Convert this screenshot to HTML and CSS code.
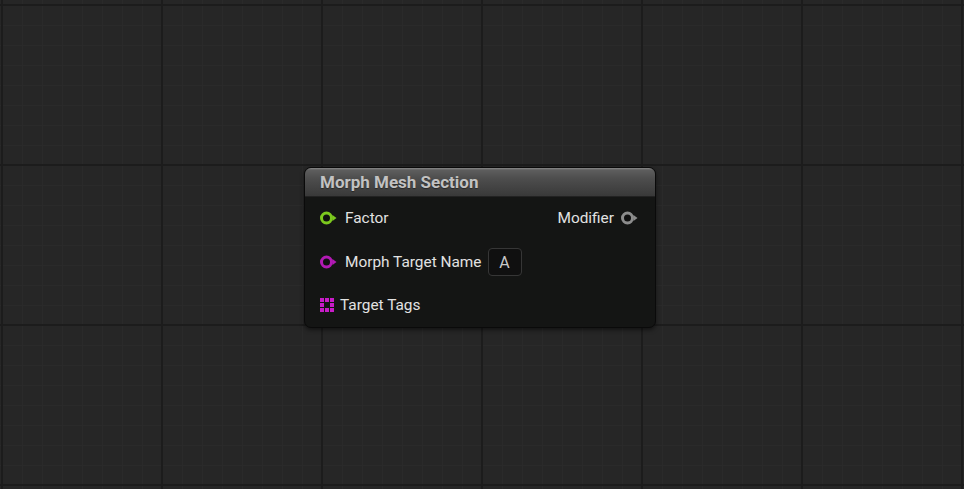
FILE: index.html
```html
<!DOCTYPE html>
<html lang="en">
<head>
  <meta charset="UTF-8" />
  <title>Morph Mesh Section</title>
  <link rel="stylesheet" href="styles.css">
</head>
<body>

<div class="graph">
  <div class="node">
    <div class="node-title">Morph Mesh Section</div>
    <div class="node-body">
      <div class="pin-row">
        <div class="pin">
          <svg class="pin-icon" width="18" height="16" viewBox="0 0 18 16">
            <circle cx="6.5" cy="8" r="5" fill="#101010" stroke="#7cc81e" stroke-width="3"/>
            <path d="M12.5 5 L16.5 8 L12.5 11 Z" fill="#7cc81e"/>
          </svg>
          <span>Factor</span>
        </div>
        <div class="pin out">
          <span>Modifier</span>
          <svg class="pin-icon" width="18" height="16" viewBox="0 0 18 16">
            <circle cx="6.5" cy="8" r="5" fill="#101010" stroke="#8c8c8c" stroke-width="3"/>
            <path d="M12.5 5 L16.5 8 L12.5 11 Z" fill="#8c8c8c"/>
          </svg>
        </div>
      </div>
      <div class="pin-row">
        <div class="pin">
          <svg class="pin-icon" width="18" height="16" viewBox="0 0 18 16">
            <circle cx="6.5" cy="8" r="5" fill="#101010" stroke="#b21ab4" stroke-width="3"/>
            <path d="M12.5 5 L16.5 8 L12.5 11 Z" fill="#b21ab4"/>
          </svg>
          <span>Morph Target Name</span>
          <div class="value-box">A</div>
        </div>
      </div>
      <div class="pin-row">
        <div class="pin">
          <svg class="tags-icon" width="14" height="14" viewBox="0 0 14 14">
            <g fill="#c81cc8">
              <rect x="0" y="0" width="4" height="4"/><rect x="5" y="0" width="4" height="4"/><rect x="10" y="0" width="4" height="4"/>
              <rect x="0" y="5" width="4" height="4"/><rect x="10" y="5" width="4" height="4"/>
              <rect x="0" y="10" width="4" height="4"/><rect x="5" y="10" width="4" height="4"/><rect x="10" y="10" width="4" height="4"/>
            </g>
          </svg>
          <span>Target Tags</span>
        </div>
      </div>
    </div>
  </div>
</div>

</body>
</html>
```

FILE: styles.css
```css
* { box-sizing: border-box; margin: 0; padding: 0; }
body { background-color: #262626; font-family: Roboto, "Liberation Sans", sans-serif; overflow: hidden; }

.graph {
  position: relative;
  width: 964px;
  height: 489px;
  background-color: #262626;
  background-image:
    linear-gradient(to right, #1c1c1c 0 2px, transparent 2px),
    linear-gradient(to bottom, #1c1c1c 0 2px, transparent 2px),
    linear-gradient(to right, #2a2a2a 0 1px, transparent 1px),
    linear-gradient(to bottom, #2a2a2a 0 1px, transparent 1px);
  background-size: 160px 160px, 160px 160px, 20px 20px, 20px 20px;
  background-position: 1px 0, 0 4px, 2px 0, 0 5px;
}

/* node sits at its canvas position */
.node {
  position: absolute;
  left: 304px;
  top: 167px;
  width: 352px;
  height: 161px;
  border: 1px solid #0a0a0a;
  border-radius: 7px;
  background: #141514;
  box-shadow: 0 2px 4px rgba(0, 0, 0, 0.5);
  overflow: hidden;
}

.node-title {
  height: 29px;
  padding: 4px 0 0 15px;
  background: linear-gradient(to bottom, #8a8a8a 0, #5e5e5e 2px, #4e4e4e 10px, #393939 100%);
  border-bottom: 1px solid #222;
  color: #c2c2c2;
  font-size: 17px;
  font-weight: bold;
  text-shadow: 0 1px 1px rgba(0, 0, 0, 0.4);
}

.node-body { padding: 10px 16px 0 15px; display: flex; flex-direction: column; }
.pin-row { display: flex; justify-content: space-between; align-items: center; height: 22px; margin-bottom: 22px; }
.pin-row:nth-child(2) { margin-bottom: 21px; }
.pin { display: flex; align-items: center; color: #e2e2e2; font-size: 15.4px; }
.pin .pin-icon { margin-right: 7px; }
.pin.out .pin-icon { margin: 0 0 0 7px; }
.tags-icon { margin-right: 6px; }

.value-box {
  margin-left: 6px;
  width: 34px;
  height: 28px;
  border: 1px solid #363636;
  border-radius: 4px;
  background: #101010;
  color: #c8c8c8;
  font-size: 16px;
  display: flex;
  align-items: center;
  justify-content: center;
}
```
